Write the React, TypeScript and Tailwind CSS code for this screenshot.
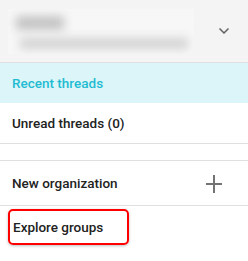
import { ChevronDown } from 'lucide-react'

export default function App() {
  return (
    <div className="w-[248px] h-[261px] bg-white overflow-hidden font-['Roboto',sans-serif]">
      {/* account header */}
      <div className="h-[63px] bg-[#f4f4f4] border-b border-[#e0e0e0] flex items-center pl-2 pr-4">
        <div className="w-[186px] h-[45px] bg-[#f7f7f7] relative overflow-hidden">
          <div className="absolute left-2 top-[7px] w-[48px] h-[14px] bg-[#c4c4c4] blur-[5px]" />
          <div className="absolute left-3 top-[29px] w-[168px] h-[11px] bg-[#d2d2d2] blur-[5px]" />
        </div>
        <ChevronDown className="ml-auto w-4 h-4 text-[#666]" strokeWidth={2.5} />
      </div>

      <div className="h-[40px] bg-[#dcf5f8] flex items-center px-3 pt-[1px]">
        <span className="text-[13.5px] font-medium text-[#1fbcd3]">Recent threads</span>
      </div>
      <div className="h-[41px] border-b border-[#e0e0e0] flex items-center px-3 pt-[1px]">
        <span className="text-[13.5px] font-medium text-[#222]">Unread threads (0)</span>
      </div>
      <div className="h-[17px] border-b border-[#e0e0e0]" />
      <div className="h-[45px] border-b border-[#e0e0e0] flex items-center pl-3 pr-[26px] pt-[1px]">
        <span className="text-[13.5px] font-medium text-[#222]">New organization</span>
        <svg className="ml-auto w-[16px] h-[18px]" viewBox="0 0 16 18">
          <path d="M8 0v18M0 9h16" stroke="#737373" strokeWidth="2" fill="none" />
        </svg>
      </div>
      <div className="pl-2 pt-[3px]">
        <div className="w-[121px] h-[36px] border-2 border-[#f00] rounded-[5px] shadow-[0_1px_3px_rgba(0,0,0,0.25)] flex items-center px-[3px] pt-[1px]">
          <span className="text-[13.5px] font-medium text-[#222]">Explore groups</span>
        </div>
      </div>
    </div>
  )
}
